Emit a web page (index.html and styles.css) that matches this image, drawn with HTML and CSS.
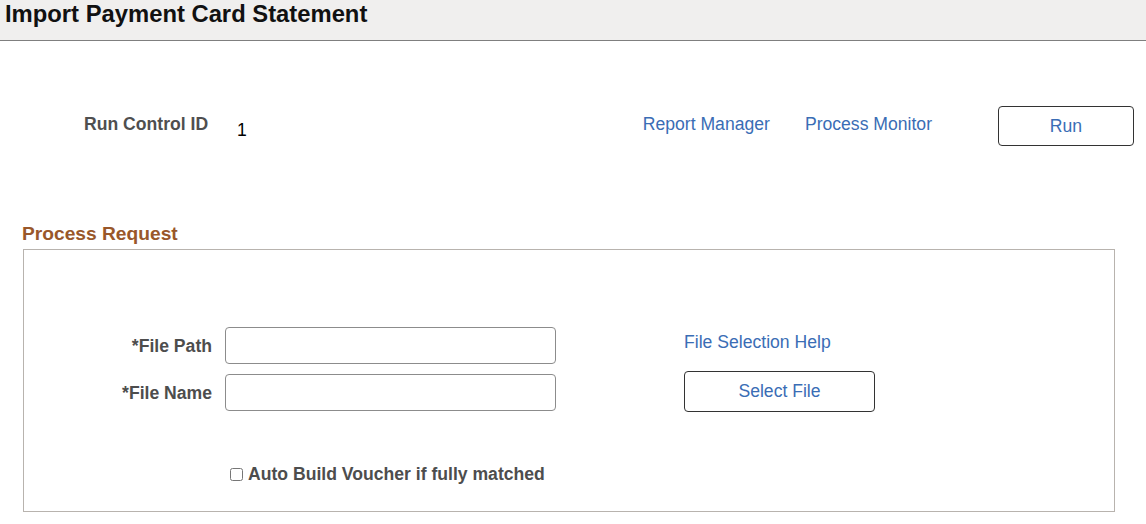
FILE: index.html
```html
<!DOCTYPE html>
<html lang="en">
<head>
<meta charset="utf-8">
<title>Import Payment Card Statement</title>
<link rel="stylesheet" href="styles.css">
</head>
<body>
<header class="page-header">
  <h1 class="page-title">Import Payment Card Statement</h1>
</header>
<main>
  <div class="run-row">
    <span class="rc-label">Run Control ID</span>
    <span class="rc-value">1</span>
    <a class="link rm" href="#">Report Manager</a>
    <a class="link pm" href="#">Process Monitor</a>
    <button class="btn run-btn" type="button">Run</button>
  </div>

  <h2 class="section-title">Process Request</h2>
  <section class="box">
    <div class="box-top">
      <div class="form-grid">
        <label class="field-label" for="fp">*File Path</label>
        <input class="text-input" id="fp" type="text">
        <label class="field-label" for="fn">*File Name</label>
        <input class="text-input" id="fn" type="text">
      </div>
      <div class="side-col">
        <a class="link" href="#">File Selection Help</a>
        <button class="btn select-btn" type="button">Select File</button>
      </div>
    </div>
    <div class="check-row">
      <input class="check" id="ab" type="checkbox">
      <label class="check-label" for="ab">Auto Build Voucher if fully matched</label>
    </div>
  </section>
</main>
</body>
</html>
```
FILE: styles.css
```css
* { box-sizing: border-box; }
html, body { margin: 0; padding: 0; background: #fff; }
body {
  font-family: "Liberation Sans", Arial, sans-serif;
  font-size: 17.6px;
  line-height: 20px;
  color: #000;
}
.page-header {
  height: 41px;
  background: #f0efee;
  border-bottom: 1px solid #7f7f7f;
  padding-left: 5px;
}
.page-title {
  margin: 0;
  font-size: 23.8px;
  line-height: 28px;
  font-weight: bold;
  color: #111;
}
.run-row {
  display: flex;
  align-items: flex-start;
  margin-top: 65px;
  padding-left: 84px;
  padding-right: 12px;
  height: 40px;
}
.rc-label {
  width: 153px;
  margin-top: 8px;
  font-weight: bold;
  color: #4f4f4f;
}
.rc-value {
  flex: 1;
  margin-top: 14px;
  color: #000;
}
.link {
  color: #3a6db5;
  text-decoration: none;
}
.rm { margin-top: 8px; margin-right: 35px; }
.pm { margin-top: 8px; margin-right: 66px; }
.btn {
  font-family: inherit;
  font-size: 17.6px;
  color: #3a6db5;
  background: #fff;
  border: 1px solid #333;
  border-radius: 4px;
  padding: 0;
  cursor: pointer;
}
.run-btn { width: 136px; height: 40px; }
.section-title {
  margin: 77px 0 4px 22px;
  font-size: 19.2px;
  line-height: 22px;
  font-weight: bold;
  color: #99572a;
}
.box {
  margin-left: 23px;
  width: 1092px;
  height: 263px;
  border: 1px solid #b8b3ae;
}
.box-top {
  display: flex;
  align-items: flex-start;
}
.form-grid {
  display: grid;
  grid-template-columns: 188px 331px;
  column-gap: 13px;
  row-gap: 10px;
  align-items: center;
  padding-top: 77px;
}
.field-label {
  text-align: right;
  font-weight: bold;
  color: #4d4d4d;
}
.text-input {
  width: 331px;
  height: 37px;
  border: 1px solid #8c8c8c;
  border-radius: 4px;
  background: #fff;
  font-family: inherit;
  font-size: 17.6px;
  padding: 0 8px;
}
.side-col {
  display: flex;
  flex-direction: column;
  align-items: flex-start;
  padding-top: 82px;
  margin-left: 128px;
}
.select-btn {
  margin-top: 19px;
  width: 191px;
  height: 41px;
}
.check-row {
  display: flex;
  align-items: center;
  margin-top: 52px;
  padding-left: 206px;
}
.check {
  width: 13px;
  height: 13px;
  margin: 0 5px 0 0;
}
.check-label {
  font-weight: bold;
  color: #4d4d4d;
}
```
